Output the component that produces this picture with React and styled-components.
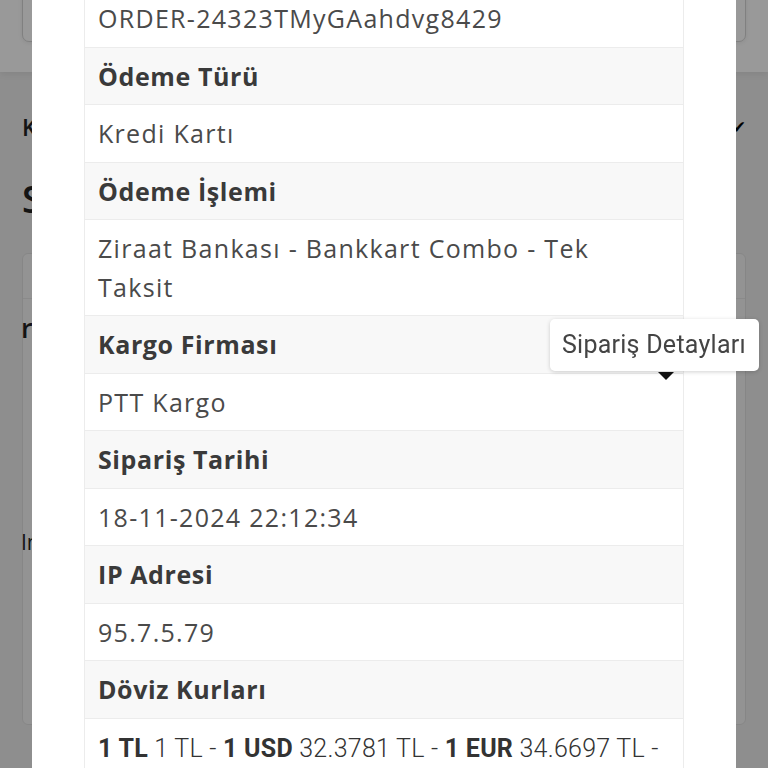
import React from 'react'
import styled, { createGlobalStyle } from 'styled-components'

const GlobalStyle = createGlobalStyle`
  html, body {
    margin:0;
    padding:0;
  }
  body {
    width:768px;
    height:768px;
    overflow:hidden;
    background:#ededed;
    font-family:"Open Sans", "Liberation Sans", sans-serif;
    color:#222;
  }
`

const details = [
  { value: 'ORDER-24323TMyGAahdvg8429' },
  { label: 'Ödeme Türü', value: 'Kredi Kartı' },
  { label: 'Ödeme İşlemi', value: 'Ziraat Bankası - Bankkart Combo - Tek Taksit' },
  { label: 'Kargo Firması', value: 'PTT Kargo' },
  { label: 'Sipariş Tarihi', value: '18-11-2024 22:12:34' },
  { label: 'IP Adresi', value: '95.7.5.79' },
  { label: 'Döviz Kurları' },
]

const rates = [
  { unit: '1 TL', rate: '1 TL' },
  { unit: '1 USD', rate: '32.3781 TL' },
  { unit: '1 EUR', rate: '34.6697 TL' },
  { unit: '1 GBP', rate: '41.0456 TL' },
]

function App() {
  return (
    <>
      <GlobalStyle />
      <Page>
        <Header>
          <Search />
        </Header>
        <Content>
          <StatusRow>
            <StatusLabel>Kargo Durumu</StatusLabel>
            <Check>✔</Check>
          </StatusRow>
          <Title>Sipariş Özeti</Title>
          <Card>
            <CardHead />
            <CardLine>reklam</CardLine>
            <CardNote>Indirim</CardNote>
          </Card>
        </Content>
      </Page>

      <Overlay>
        <Modal>
          <Table>
            {details.map((d, i) => (
              <React.Fragment key={i}>
                {d.label && <Cell $head>{d.label}</Cell>}
                {d.value && <Cell>{d.value}</Cell>}
              </React.Fragment>
            ))}
            <Cell>
              <Rates>
                {rates.map((r, i) => (
                  <React.Fragment key={r.unit}>
                    <b>{r.unit}</b> {r.rate}{i < rates.length - 1 ? ' - ' : ''}
                  </React.Fragment>
                ))}
              </Rates>
            </Cell>
          </Table>
        </Modal>
        <Tooltip>Sipariş Detayları</Tooltip>
      </Overlay>
    </>
  )
}

const Page = styled.div`
  display:flex;
  flex-direction:column;
  min-height:768px;
`
const Header = styled.div`
  height:72px;
  background:#fff;
  box-shadow:0 3px 6px rgba(0,0,0,0.06);
  padding:0 22px;
`
const Search = styled.div`
  height:50px;
  margin-top:-10px;
  border:1px solid #d6d6d6;
  border-radius:7px;
  background:#fff;
  box-shadow:0 1px 4px rgba(0,0,0,0.08);
`
const Content = styled.div`
  display:flex;
  flex-direction:column;
  padding:0 22px;
`
const StatusRow = styled.div`
  display:flex;
  justify-content:space-between;
  align-items:center;
  margin-top:38px;
  height:34px;
`
const StatusLabel = styled.span`
  font-size:23px;
  font-weight:600;
`
const Check = styled.span`
  font-family:"DejaVu Sans", sans-serif;
  font-size:17px;
  font-weight:700;
  color:#000;
`
const Title = styled.h2`
  margin:30px 0 0;
  font-size:37px;
  font-weight:600;
  line-height:50px;
`
const Card = styled.div`
  margin-top:29px;
  height:470px;
  background:#f5f5f5;
  border:1px solid #e0e0e0;
  border-radius:6px;
  display:flex;
  flex-direction:column;
`
const CardHead = styled.div`
  height:44px;
  border-bottom:1px solid #e6e6e6;
`
const CardLine = styled.div`
  margin:10px 0 0 -2px;
  font-size:27px;
  font-weight:600;
`
const CardNote = styled.div`
  margin:182px 0 0 -2px;
  font-size:21px;
`

const Overlay = styled.div`
  position:fixed;
  inset:0;
  background:rgba(0,0,0,0.4);
  display:flex;
  justify-content:center;
`
const Modal = styled.div`
  width:704px;
  height:100%;
  background:#fff;
  padding:0 52px;
  box-sizing:border-box;
  overflow:hidden;
`
const Table = styled.div`
  margin-top:-11px;
  border:1px solid #ececec;
  display:flex;
  flex-direction:column;
`
const Cell = styled.div`
  padding:9px 16px 9px 13px;
  line-height:38.5px;
  font-size:25px;
  border-top:1px solid #ececec;
  background:${p => (p.$head ? '#f8f8f8' : '#fff')};
  color:${p => (p.$head ? '#3a3a3a' : '#4a4a4a')};
  font-weight:${p => (p.$head ? 700 : 400)};
  letter-spacing:${p => (p.$head ? '0.6px' : '1.3px')};
  &:first-child {
    border-top:none;
  }
`
const Rates = styled.span`
  font-family:Roboto, "Liberation Sans", sans-serif;
  font-weight:300;
  letter-spacing:0.25px;
  color:#333;
  b {
    font-weight:700;
  }
`
const Tooltip = styled.div`
  position:absolute;
  left:550px;
  top:319px;
  padding:10px 13px 10px 12px;
  line-height:32px;
  font-family:Roboto, "Liberation Sans", sans-serif;
  font-size:25px;
  letter-spacing:0.25px;
  color:#444;
  background:#fff;
  border-radius:5px;
  box-shadow:0 1px 4px rgba(0,0,0,0.18);
  &::after {
    content:'';
    position:absolute;
    left:108px;
    top:100%;
    margin-top:1px;
    border-left:8px solid transparent;
    border-right:8px solid transparent;
    border-top:8px solid #111;
  }
`

export default App
